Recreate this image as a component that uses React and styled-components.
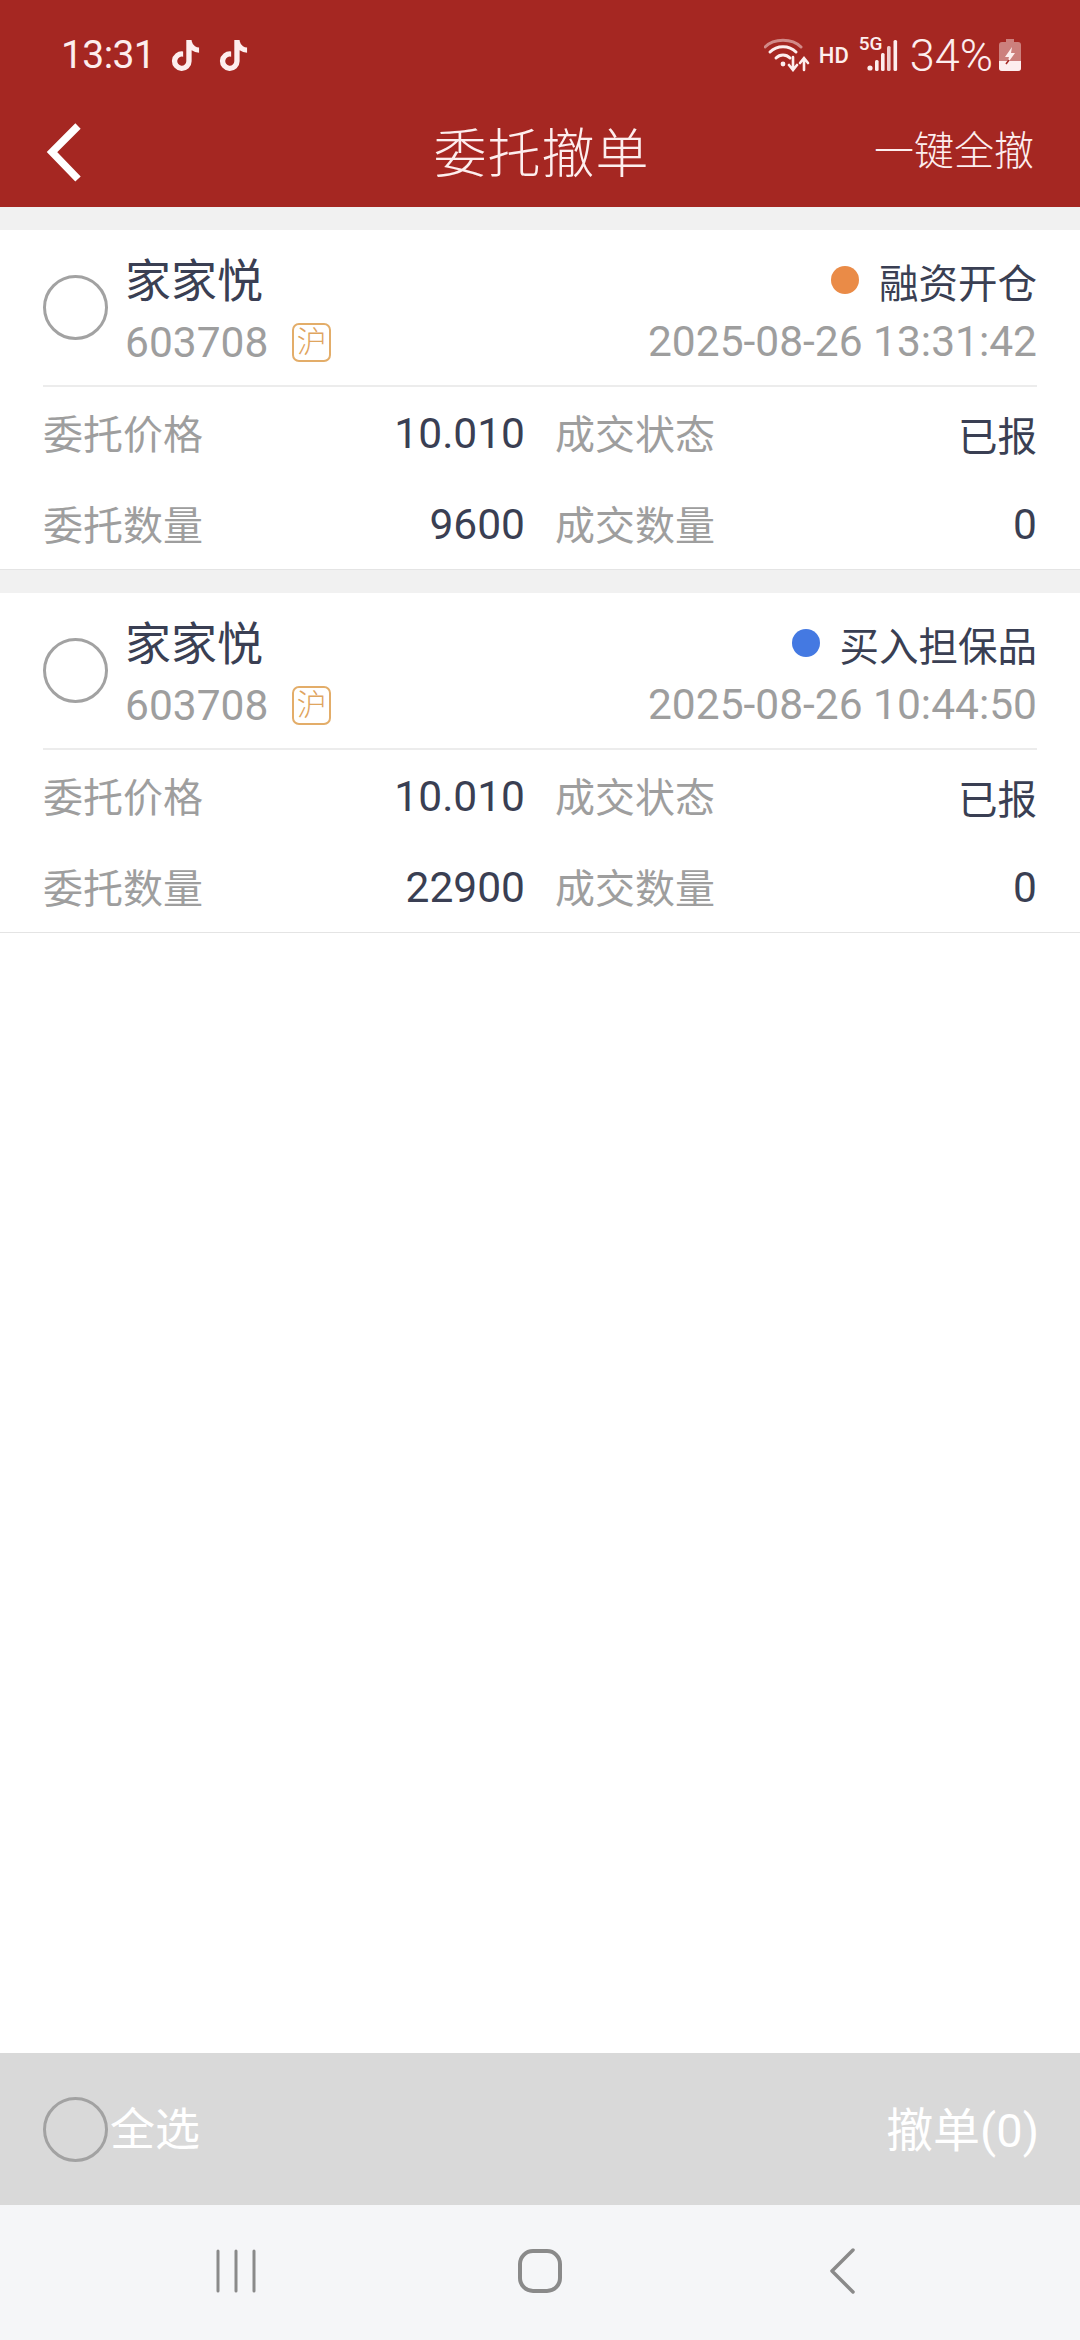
import styled, { createGlobalStyle } from "styled-components"
import { FaTiktok } from "react-icons/fa"

const GlobalStyle = createGlobalStyle`
    html, body {
        margin: 0;
        padding: 0;
        background: #fff;
    }
    * {
        box-sizing: border-box;
    }
`

const Page = styled.div`
    width: 1080px;
    height: 2340px;
    display: flex;
    flex-direction: column;
    background: #fff;
    font-family: Roboto, "Noto Sans CJK SC", sans-serif;
    overflow: hidden;
`

const Header = styled.header`
    height: 207px;
    flex: none;
    background: #a52722;
    color: #fdeeee;
`

const StatusBar = styled.div`
    height: 110px;
    padding: 0 61px 0 61px;
    display: flex;
    align-items: center;
    justify-content: space-between;
`

const StatusLeft = styled.div`
    display: flex;
    align-items: center;
`

const Clock = styled.span`
    font-size: 39px;
    letter-spacing: -0.6px;
    font-weight: 400;
    margin-right: 15px;
`

const NoteIcon = styled(FaTiktok)`
    font-size: 31px;
    margin-right: 17px;
`

const StatusRight = styled.div`
    display: flex;
    align-items: center;
    margin-right: -2px;
`

const HdLabel = styled.span`
    font-size: 22px;
    font-weight: 500;
    margin: 0 10px 0 9px;
`

const SignalWrap = styled.div`
    position: relative;
    width: 40px;
    height: 32px;
    margin-top: 2px;
`

const FiveG = styled.span`
    position: absolute;
    left: 0;
    top: -8px;
    font-size: 19px;
    font-weight: 500;
`

const Percent = styled.span`
    font-size: 45px;
    font-weight: 300;
    margin: 0 6px 0 11px;
`

const TitleBar = styled.div`
    height: 97px;
    padding: 0 46px 12px 46px;
    display: flex;
    align-items: center;
    justify-content: space-between;
    position: relative;
`

const Title = styled.h1`
    position: absolute;
    left: 3px;
    right: 0;
    top: 13px;
    margin: 0;
    text-align: center;
    font-size: 53px;
    font-weight: 300;
    line-height: 64px;
    letter-spacing: 1px;
`

const ActionLink = styled.span`
    font-size: 40px;
    font-weight: 300;
    margin-top: -10px;
`

const List = styled.main`
    flex: 1;
    display: flex;
    flex-direction: column;
`

const Card = styled.section`
    border-top: 23px solid #f1f1f1;
    border-bottom: 1px solid #e4e4e4;
    padding: 0 43px;
`

const CardTop = styled.div`
    height: 157px;
    display: flex;
    align-items: center;
    border-bottom: 2px solid #ececec;
`

const Radio = styled.span`
    flex: none;
    width: 65px;
    height: 65px;
    border: 3px solid #a2a2a2;
    border-radius: 50%;
`

const Stock = styled.div`
    margin-left: 17px;
    padding-top: 4px;
    flex: 1;
`

const StockName = styled.div`
    font-size: 46px;
    line-height: 56px;
    color: #3a3f53;
`

const CodeLine = styled.div`
    display: flex;
    align-items: center;
    height: 48px;
    margin-top: 9px;
    font-size: 42.5px;
    color: #9e9e9e;
`

const Market = styled.span`
    width: 39px;
    height: 39px;
    margin-left: 24px;
    border: 2px solid #e3ad69;
    border-radius: 7px;
    color: #dfa55f;
    font-size: 30px;
    font-weight: 300;
    line-height: 33px;
    text-align: center;
`

const OrderInfo = styled.div`
    display: flex;
    flex-direction: column;
    align-items: flex-end;
    padding-top: 3px;
`

const OrderType = styled.div`
    display: flex;
    align-items: center;
    height: 56px;
    font-size: 39.5px;
    color: #3a3f53;
`

const Dot = styled.span`
    width: 28px;
    height: 28px;
    margin-right: 20px;
    border-radius: 50%;
    background: ${p => p.$color};
`

const OrderTime = styled.div`
    height: 48px;
    margin-top: 10px;
    font-size: 42.5px;
    line-height: 48px;
    color: #9e9e9e;
`

const Rows = styled.div`
    display: grid;
    grid-template-columns: 482px 482px;
    column-gap: 30px;
    grid-auto-rows: 91px;
    height: 182px;
`

const Cell = styled.div`
    display: flex;
    align-items: center;
    justify-content: space-between;
    font-size: 40px;
    padding-top: 1px;
`

const Label = styled.span`
    color: #9e9e9e;
    margin-top: -2px;
`

const Value = styled.span`
    color: #3a3f53;
    font-size: ${p => (p.$cjk ? "39.5px" : "42.5px")};
`

const BottomBar = styled.div`
    flex: none;
    height: 152px;
    padding: 0 41px 0 43px;
    display: flex;
    align-items: center;
    justify-content: space-between;
    background: #d9d9d9;
    color: #fff;
    font-size: 47px;
`

const SelectAll = styled.div`
    display: flex;
    align-items: center;
    font-size: 45px;
    gap: 2px;
`

const BarText = styled.span`
    margin-top: -5px;
`

const NavBar = styled.nav`
    flex: none;
    height: 135px;
    padding: 0 225px 4px 216px;
    display: flex;
    align-items: center;
    justify-content: space-between;
    background: #f5f6f8;
`

const HomeSlot = styled.div`
    margin-left: -5px;
    display: flex;
`

const orders = [
    { type: "融资开仓", color: "#ea8b47", time: "2025-08-26 13:31:42", qty: "9600" },
    { type: "买入担保品", color: "#4479e2", time: "2025-08-26 10:44:50", qty: "22900" },
]

const WifiIcon = () => (
    <svg width="46" height="34" viewBox="0 0 46 34" fill="none" stroke="currentColor" strokeLinecap="round">
        <path d="M1 9C10 0 28 0 37 9" strokeWidth="3" opacity="0.5" />
        <path d="M6 14C13 7 25 7 32 14" strokeWidth="3" />
        <path d="M12 20C16 16 22 16 26 20" strokeWidth="3" />
        <circle cx="19" cy="26" r="2.4" fill="currentColor" stroke="none" />
        <path d="M29 19V31M25 27L29 32L33 27" strokeWidth="2.6" />
        <path d="M40 32V21M36 25L40 20L44 25" strokeWidth="2.6" />
    </svg>
)

const SignalIcon = () => (
    <svg width="40" height="32" viewBox="0 0 40 32" fill="currentColor" style={{ display: "block" }}>
        <circle cx="11" cy="28" r="2.6" />
        <rect x="16" y="20" width="3.6" height="11" rx="1.5" />
        <rect x="22" y="13" width="3.6" height="18" rx="1.5" />
        <rect x="28" y="6" width="3.6" height="25" rx="1.5" opacity="0.85" />
        <rect x="34.5" y="0" width="3.6" height="31" rx="1.5" />
    </svg>
)

const BatteryIcon = () => (
    <svg width="22" height="32" viewBox="0 0 22 32">
        <path d="M7 0H15V3H19Q22 3 22 6V29Q22 32 19 32H3Q0 32 0 29V6Q0 3 3 3H7Z" fill="#fdeeee" opacity="0.45" />
        <path d="M0 22H22V29Q22 32 19 32H3Q0 32 0 29Z" fill="#fdeeee" />
        <path d="M13 8L6 18H10L8 25L16 14H12Z" fill="#fdeeee" />
        <path d="M10 21L7 25" stroke="#a52722" strokeWidth="1.5" />
    </svg>
)

const BackIcon = () => (
    <svg width="36" height="60" viewBox="0 0 36 60" fill="none" stroke="#fff" strokeWidth="7.5">
        <path d="M32 3L6 29L32 56" />
    </svg>
)

const NavRecents = () => (
    <svg width="40" height="44" viewBox="0 0 40 44" stroke="#8a8a8a" strokeWidth="3" strokeLinecap="round">
        <path d="M2 2V42M20 2V42M38 2V42" />
    </svg>
)

const NavHome = () => (
    <svg width="44" height="44" viewBox="0 0 44 44" fill="none" stroke="#8a8a8a" strokeWidth="4">
        <rect x="2" y="2" width="40" height="40" rx="13" />
    </svg>
)

const NavBack = () => (
    <svg width="26" height="46" viewBox="0 0 26 46" fill="none" stroke="#8a8a8a" strokeWidth="3.5" strokeLinecap="round" strokeLinejoin="round">
        <path d="M24 2L3 23L24 44" />
    </svg>
)

const OrderCard = ({ order }) => (
    <Card>
        <CardTop>
            <Radio />
            <Stock>
                <StockName>家家悦</StockName>
                <CodeLine>
                    603708
                    <Market>沪</Market>
                </CodeLine>
            </Stock>
            <OrderInfo>
                <OrderType>
                    <Dot $color={order.color} />
                    {order.type}
                </OrderType>
                <OrderTime>{order.time}</OrderTime>
            </OrderInfo>
        </CardTop>
        <Rows>
            <Cell><Label>委托价格</Label><Value>10.010</Value></Cell>
            <Cell><Label>成交状态</Label><Value $cjk>已报</Value></Cell>
            <Cell><Label>委托数量</Label><Value>{order.qty}</Value></Cell>
            <Cell><Label>成交数量</Label><Value>0</Value></Cell>
        </Rows>
    </Card>
)

const App = () => {
    return (
        <Page>
            <GlobalStyle />
            <Header>
                <StatusBar>
                    <StatusLeft>
                        <Clock>13:31</Clock>
                        <NoteIcon />
                        <NoteIcon />
                    </StatusLeft>
                    <StatusRight>
                        <WifiIcon />
                        <HdLabel>HD</HdLabel>
                        <SignalWrap>
                            <FiveG>5G</FiveG>
                            <SignalIcon />
                        </SignalWrap>
                        <Percent>34%</Percent>
                        <BatteryIcon />
                    </StatusRight>
                </StatusBar>
                <TitleBar>
                    <BackIcon />
                    <Title>委托撤单</Title>
                    <ActionLink>一键全撤</ActionLink>
                </TitleBar>
            </Header>
            <List>
                {orders.map(order => (
                    <OrderCard key={order.time} order={order} />
                ))}
            </List>
            <BottomBar>
                <SelectAll>
                    <Radio />
                    <BarText>全选</BarText>
                </SelectAll>
                <BarText>撤单(0)</BarText>
            </BottomBar>
            <NavBar>
                <NavRecents />
                <HomeSlot><NavHome /></HomeSlot>
                <NavBack />
            </NavBar>
        </Page>
    )
}

export default App
